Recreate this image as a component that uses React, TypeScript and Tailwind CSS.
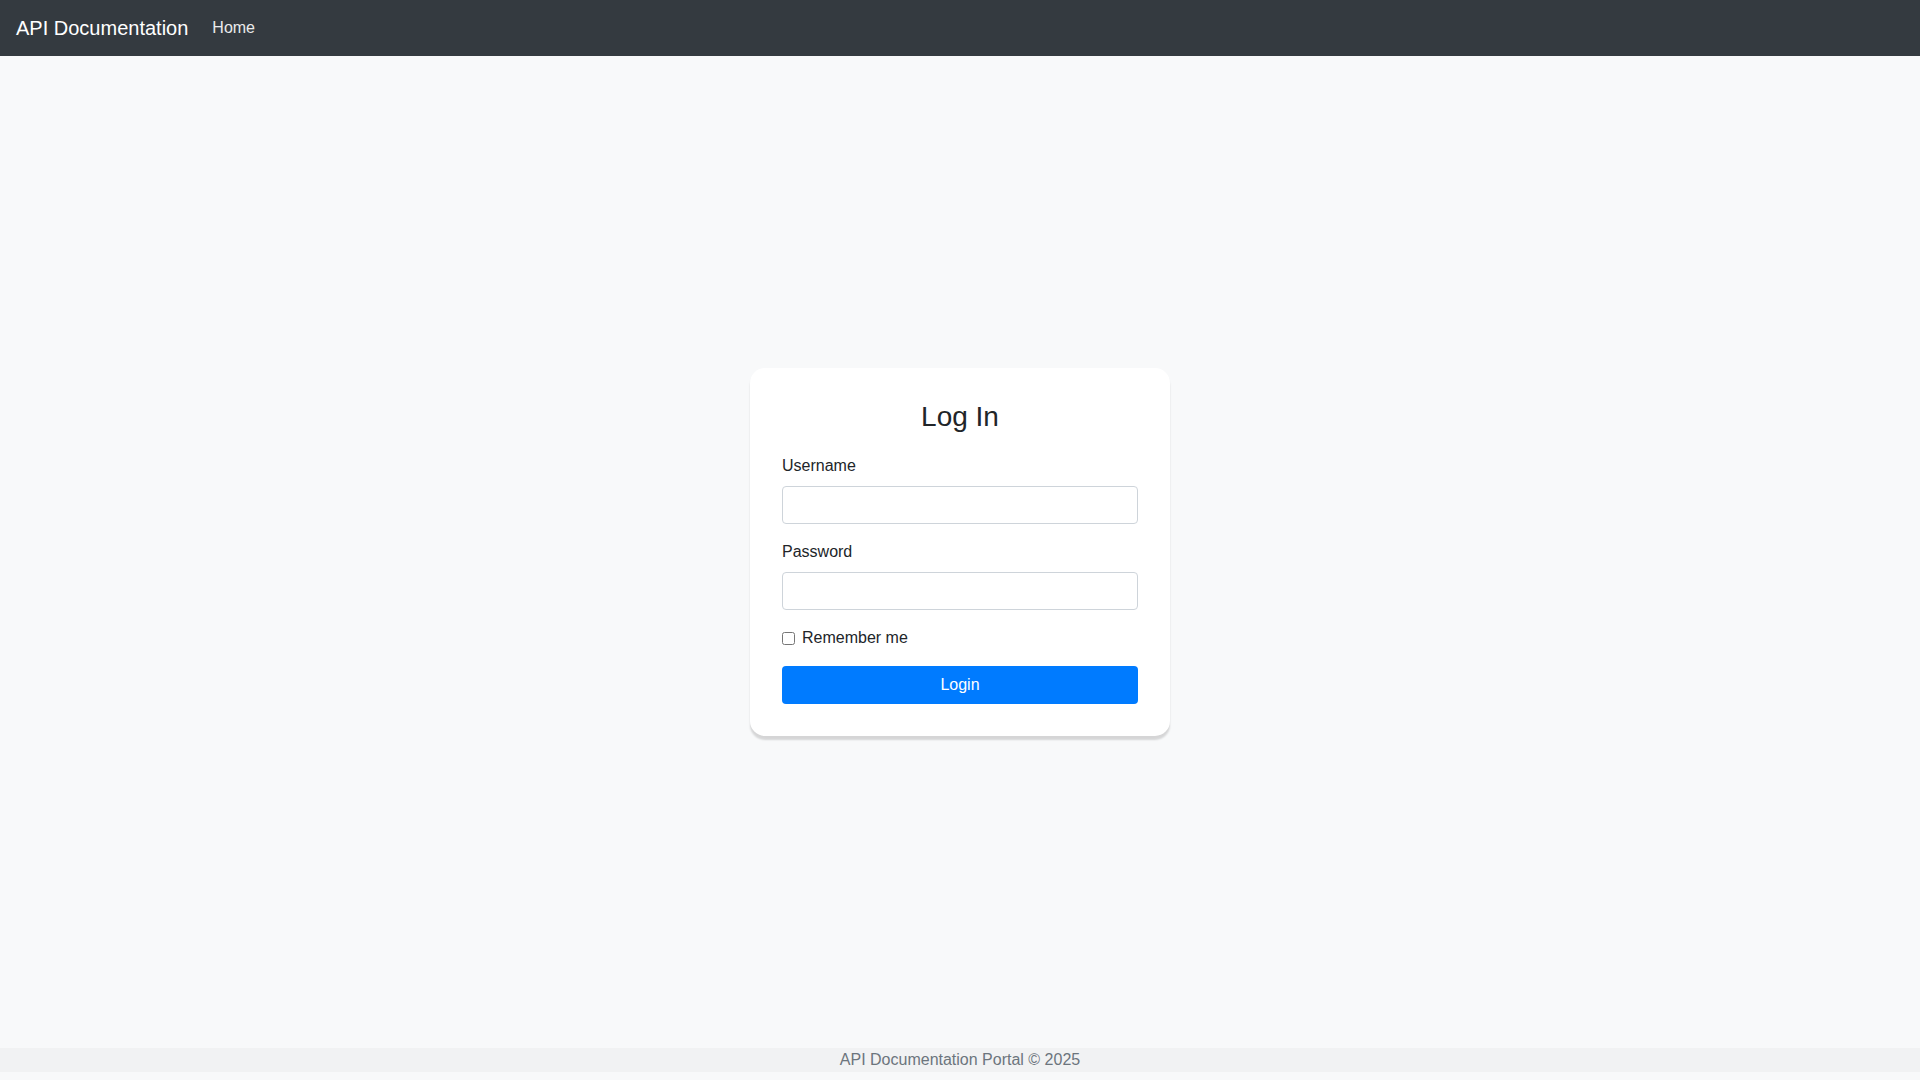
import React from "react";

export default function App() {
  return (
    <div
      className="flex h-screen flex-col bg-[#f8f9fa] text-[#212529]"
      style={{ fontFamily: '"Liberation Sans", Arial, sans-serif' }}
    >
      <nav className="flex h-[56px] shrink-0 items-center bg-[#343a40] px-4">
        <a className="mr-4 text-[20px] leading-[30px] text-white" href="#">
          API Documentation
        </a>
        <a className="px-2 text-[16px] leading-[24px] text-white/90" href="#">
          Home
        </a>
      </nav>

      <main className="flex flex-1 items-center justify-center">
        <div className="w-[420px] rounded-[15px] bg-white p-8 shadow-[0_4px_2px_rgba(0,0,0,0.14)]">
          <h3 className="mb-[21px] text-center text-[28px] font-normal leading-[1.2] text-[#212529]">
            Log In
          </h3>
          <div className="mb-4">
            <label className="mb-2 block text-[16px] leading-[24px] text-[#212529]">
              Username
            </label>
            <input
              type="text"
              className="block h-[38px] w-full rounded-[4px] border border-[#ced4da] bg-white px-3 text-[16px] outline-none"
            />
          </div>
          <div className="mb-4">
            <label className="mb-2 block text-[16px] leading-[24px] text-[#212529]">
              Password
            </label>
            <input
              type="password"
              className="block h-[38px] w-full rounded-[4px] border border-[#ced4da] bg-white px-3 text-[16px] outline-none"
            />
          </div>
          <div className="mb-4 flex h-[24px] items-center">
            <input type="checkbox" className="mr-[7px] h-[13px] w-[13px]" />
            <span className="text-[16px] leading-[24px] text-[#212529]">Remember me</span>
          </div>
          <button className="flex h-[38px] w-full items-center justify-center rounded-[4px] bg-[#007bff] text-[16px] text-white">
            Login
          </button>
        </div>
      </main>

      <footer className="h-[24px] shrink-0 bg-[#f1f2f3] text-center text-[16px] leading-[24px] text-[#6c757d]">
        API Documentation Portal © 2025
      </footer>
      <div className="h-[8px] shrink-0" />
    </div>
  );
}
